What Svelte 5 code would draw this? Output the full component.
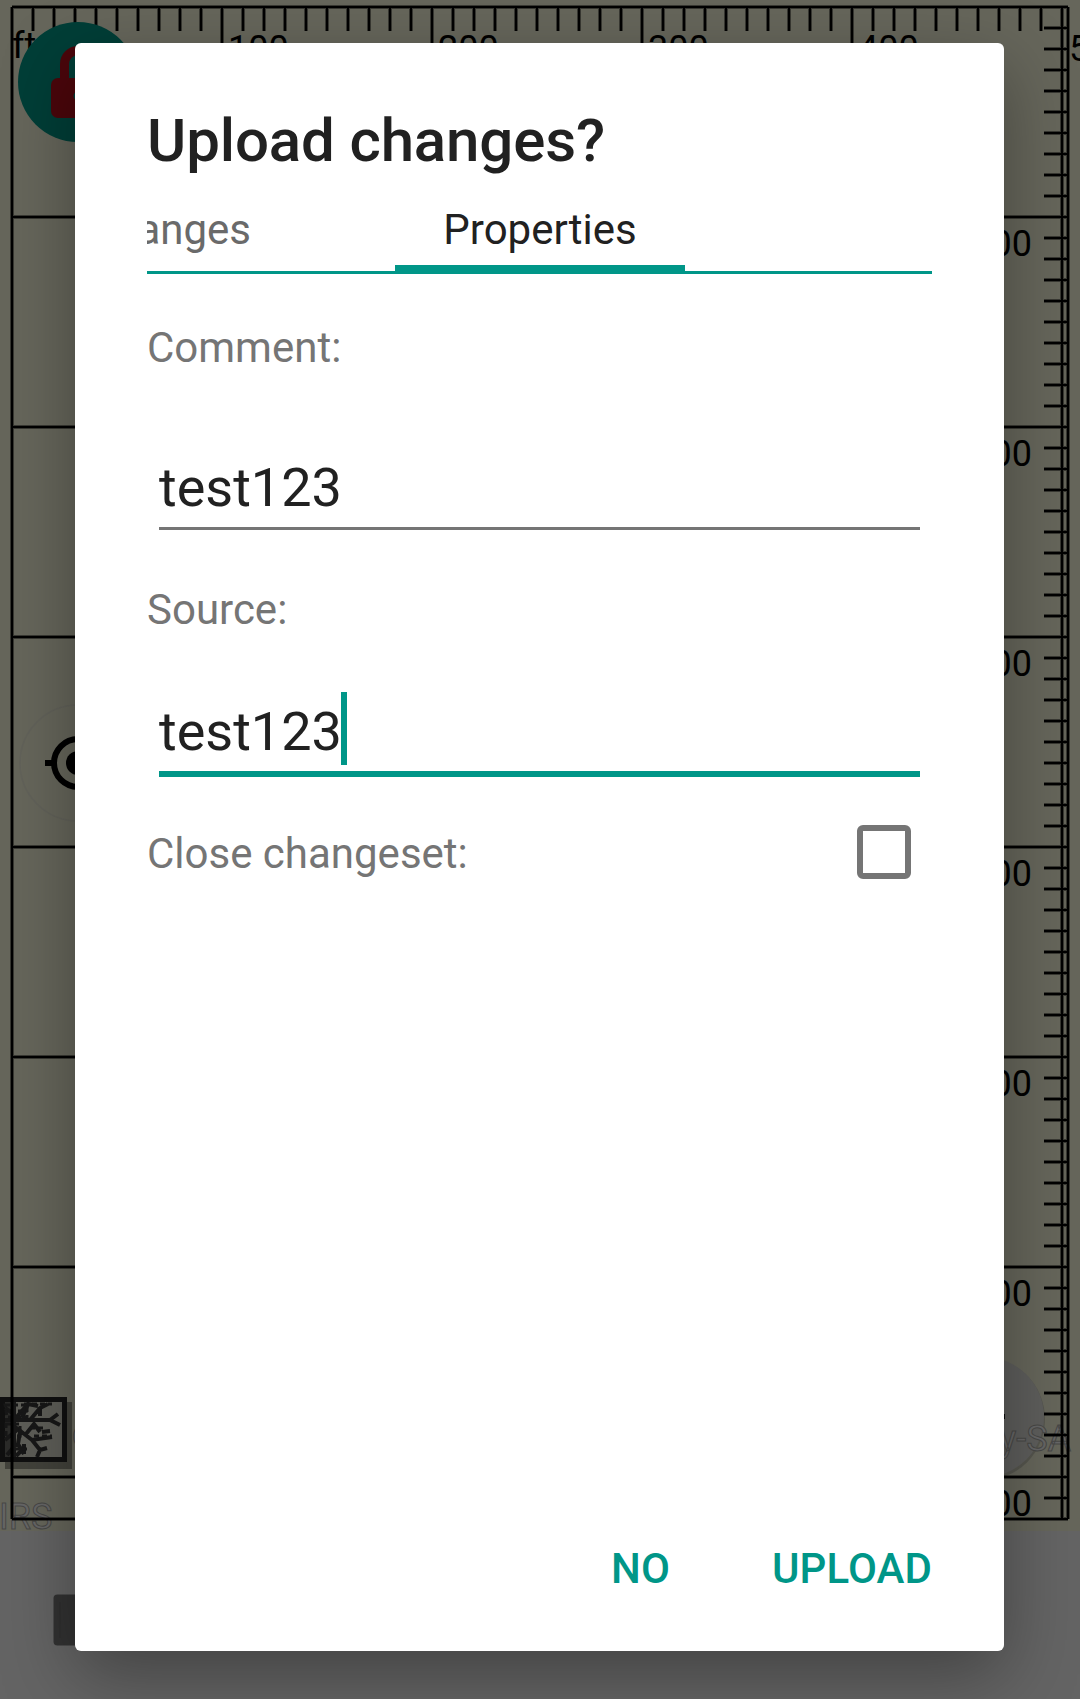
<script>
  const step = 210;
  const columns = [1, 2, 3, 4, 5];
  const rows = [1, 2, 3, 4, 5, 6, 7];

  // Ruler lines: a major line every 210px, nine ticks in between.
  let lines = 'M12 7H1068M12 7V1519M1068 7V1519M12 1519H1068';
  for (let i = 1; i <= 49; i++) {
    lines += i % 10 ? `M${12 + i * 21} 7V31` : `M${12 + i * 21} 7V1519`;
  }
  lines += 'M1062 7V1519';
  for (let i = 1; i <= 71; i++) {
    lines += i % 10 ? `M1044 ${7 + i * 21}H1068` : `M12 ${7 + i * 21}H1068`;
  }

  let comment = $state('test123');
  let source = $state('test123');
</script>

<main class="screen">
  <svg class="map" viewBox="0 0 1080 1699" width="1080" height="1699" aria-hidden="true">
    <rect width="1080" height="1699" fill="#646464" />
    <rect width="1080" height="1531" fill="#66665b" />

    <rect x="5" y="1402" width="67" height="67" fill="#42423b" />
    <rect x="0" y="1397" width="67" height="65" fill="#101010" />
    <rect x="5" y="1402" width="57" height="55" fill="#5e5e58" />
    <rect x="5" y="1402" width="9" height="55" fill="#2b2b29" />
    <g class="tree">
      <path d="M5 1420H50l8-6M50 1420l10 5M14 1402v55M14 1420l14-16 10 2M28 1404l-6 14M30 1420l10-12 8-4M40 1408v8M14 1426l18 14 20-3M32 1440l8 10 7-2M40 1450l-3 7M26 1434l8-10 6 8M20 1432l-2 12 6 10M24 1444v10M5 1408l9 6M5 1440l12-10M7 1455l10-12M42 1432l8-1M22 1450l-6 6" />
      <path class="fine" d="M5 1405h22v12h-20zM6 1424h14v12H6zM24 1404h28M18 1411h10M30 1428h14M34 1436h18M14 1449h14" />
    </g>

    <circle cx="984" cy="1419" r="61" fill="#56564e" />
    <circle cx="984" cy="1417" r="60" fill="#5e5e5c" />
    <path d="M964 1416.500H1005" stroke="#0c0c0c" stroke-width="5" />
    <text class="credit" x="-1" y="1529">IRS</text>
    <text class="credit" x="1071" y="1451" text-anchor="end">By-SA</text>
    <text class="credit" x="72" y="1450">©</text>

    <path class="halo" d={lines} />
    <path class="rule" d={lines} />
    <text class="mark" x="12" y="58">ft</text>
    {#each columns as n}
      <text class="mark" x={n === 5 ? 1069 : 12 + n * step + 6} y="61">{n * 100}</text>
    {/each}
    {#each rows as n}
      <text class="mark" x="1032" y={46 + n * step} text-anchor="end">{n * 100}</text>
    {/each}

    <circle cx="78" cy="82" r="60" fill="#003e37" />
    <path d="M64.500 84V64a13.500 13.500 0 0 1 27 0v20" fill="none" stroke="#4b060b" stroke-width="9" />
    <rect x="51" y="78" width="54" height="40" rx="7" fill="#4b060b" />
    <circle cx="78" cy="96" r="4.500" fill="#003e37" />

    <circle cx="78" cy="763" r="58" fill="none" stroke="#62625a" stroke-width="1.500" />
    <circle cx="78" cy="763" r="24" fill="none" stroke="#000" stroke-width="6" />
    <circle cx="78" cy="763" r="12" />
    <path d="M45 763h8M78 730v8M78 788v8" stroke="#000" stroke-width="6" />

    <rect x="53.500" y="1594.500" width="80" height="51" rx="4" fill="#323232" />
    <path d="M60 1602v36" stroke="#2c2c2c" stroke-width="1" />
  </svg>

  <section class="dialog">
    <h1>Upload changes?</h1>
    <nav class="tabs">
      <span class="tab previous">Changes</span>
      <span class="tab current">Properties</span>
    </nav>

    <div class="label comment">Comment:</div>
    <div class="field">{comment}</div>
    <div class="label source">Source:</div>
    <div class="field focused">{source}<i class="caret"></i></div>

    <div class="close-row">
      <span class="label">Close changeset:</span>
      <span class="checkbox" role="checkbox" aria-checked="false" aria-label="Close changeset" tabindex="0"></span>
    </div>

    <footer>
      <button>NO</button>
      <button>UPLOAD</button>
    </footer>
  </section>
</main>

<style>
  :global(body) {
    margin: 0;
  }
  .screen {
    position: relative;
    box-sizing: border-box;
    width: 1080px;
    height: 1699px;
    padding: 43px 76px 48px 75px;
    overflow: hidden;
    font-family: Roboto, sans-serif;
    color: #212121;
  }
  .map {
    position: absolute;
    inset: 0;
  }
  .halo {
    fill: none;
    stroke: rgba(0, 0, 0, 0.45);
    stroke-width: 4;
  }
  .rule {
    fill: none;
    stroke: #000;
    stroke-width: 2;
  }
  .mark {
    font-size: 36px;
    fill: #000;
  }
  .credit {
    font-size: 36px;
    fill: #666666;
    stroke: #484846;
    stroke-width: 1;
  }
  .tree {
    fill: none;
    stroke: #171717;
    stroke-width: 4;
  }
  .fine {
    stroke-width: 3;
    stroke-dasharray: 5 3;
  }
  .dialog {
    position: relative;
    box-sizing: border-box;
    display: flex;
    flex-direction: column;
    height: 1608px;
    padding: 63px 72px 57px;
    background: #fff;
    border-radius: 6px;
    box-shadow: 0 24px 72px rgba(0, 0, 0, 0.34);
  }
  h1 {
    margin: 0;
    font-size: 60px;
    line-height: 70px;
    font-weight: 500;
    letter-spacing: -0.13px;
  }
  .tabs {
    display: grid;
    grid-template-columns: 248px 290px 1fr;
    height: 69px;
    margin-top: -1px;
    padding-top: 30px;
    font-size: 42px;
    line-height: 50px;
    background: linear-gradient(#009688, #009688) bottom / 100% 3px no-repeat;
  }
  .tab {
    display: flex;
    justify-content: center;
  }
  .previous {
    box-sizing: border-box;
    width: 104px;
    justify-content: flex-end;
    overflow: hidden;
    color: #6a6a6a;
  }
  .current {
    border-bottom: 9px solid #009688;
  }
  .label {
    font-size: 42px;
    line-height: 50px;
    color: #757575;
  }
  .comment {
    margin-top: 49px;
    margin-bottom: 1px;
  }
  .source {
    margin-top: 55px;
  }
  .field {
    display: flex;
    height: 71px;
    margin: 82px 12px 0;
    font-size: 54px;
    line-height: 64px;
    border-bottom: 3px solid #757575;
  }
  .focused {
    margin-top: 65px;
    border-bottom: 6px solid #009688;
  }
  .caret {
    width: 6px;
    height: 73px;
    margin: -8px 0 0 -1px;
    background: #009688;
  }
  .close-row {
    display: flex;
    justify-content: space-between;
    height: 54px;
    margin-top: 48px;
    padding-right: 21px;
  }
  .close-row .label {
    padding-top: 4px;
  }
  .checkbox {
    box-sizing: border-box;
    width: 54px;
    height: 54px;
    border: 6px solid #757575;
    border-radius: 6px;
  }
  footer {
    display: flex;
    justify-content: flex-end;
    gap: 102px;
    margin-top: auto;
  }
  button {
    padding: 0;
    border: 0;
    background: none;
    font: 500 42px/50px Roboto, sans-serif;
    letter-spacing: 0.1px;
    color: #009688;
  }
</style>
